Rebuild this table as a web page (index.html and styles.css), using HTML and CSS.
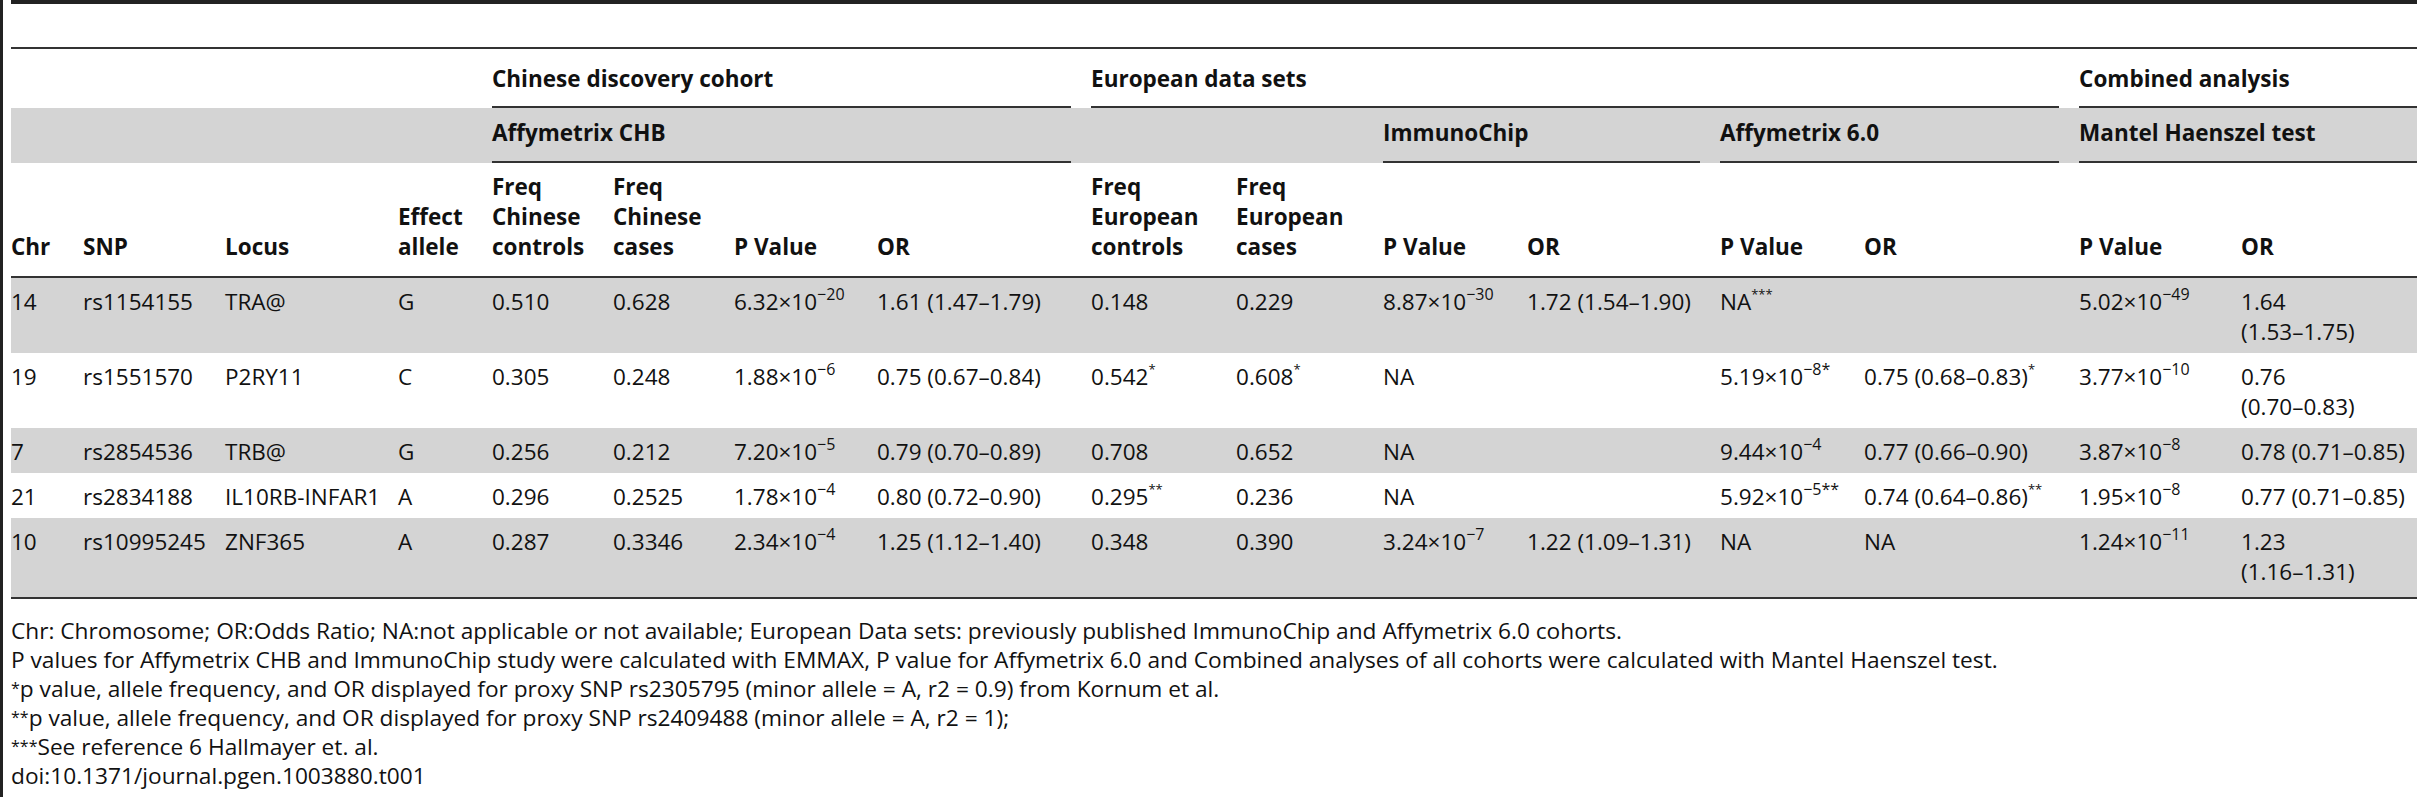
FILE: index.html
```html
<!DOCTYPE html>
<html lang="en">
<head>
  <meta charset="UTF-8">
  <meta name="viewport" content="width=device-width, initial-scale=1.0">
  <title>Table 1</title>
  <link rel="stylesheet" href="styles.css">
</head>
<body>
  <div class="page">
    <div class="topbar"></div>

    <table class="snp-table">
      <colgroup>
        <col class="w-chr"><col class="w-snp"><col class="w-locus"><col class="w-allele">
        <col class="w-cc"><col class="w-cc"><col class="w-p1"><col class="w-or1">
        <col class="w-ec"><col class="w-ecase"><col class="w-p2"><col class="w-or2">
        <col class="w-p3"><col class="w-or3"><col class="w-p4"><col class="w-or4">
      </colgroup>
      <thead>
        <tr class="tier1">
          <th colspan="4"></th>
          <th colspan="4"><div class="grp">Chinese discovery cohort</div></th>
          <th colspan="6"><div class="grp">European data sets</div></th>
          <th colspan="2"><div class="grp last">Combined analysis</div></th>
        </tr>
        <tr class="tier2">
          <th colspan="4"></th>
          <th colspan="4"><div class="grp">Affymetrix CHB</div></th>
          <th colspan="2"></th>
          <th colspan="2"><div class="grp">ImmunoChip</div></th>
          <th colspan="2"><div class="grp">Affymetrix 6.0</div></th>
          <th colspan="2"><div class="grp last">Mantel Haenszel test</div></th>
        </tr>
        <tr class="tier3">
          <th>Chr</th>
          <th>SNP</th>
          <th>Locus</th>
          <th>Effect<br>allele</th>
          <th>Freq<br>Chinese<br>controls</th>
          <th>Freq<br>Chinese<br>cases</th>
          <th>P Value</th>
          <th>OR</th>
          <th>Freq<br>European<br>controls</th>
          <th>Freq<br>European<br>cases</th>
          <th>P Value</th>
          <th>OR</th>
          <th>P Value</th>
          <th>OR</th>
          <th>P Value</th>
          <th>OR</th>
        </tr>
      </thead>
      <tbody>
        <tr class="shade">
          <td>14</td><td>rs1154155</td><td>TRA@</td><td>G</td>
          <td>0.510</td><td>0.628</td><td>6.32×10<sup>−20</sup></td><td>1.61 (1.47–1.79)</td>
          <td>0.148</td><td>0.229</td><td>8.87×10<sup>−30</sup></td><td>1.72 (1.54–1.90)</td>
          <td>NA<span class="ast">***</span></td><td></td><td>5.02×10<sup>−49</sup></td><td>1.64<br>(1.53–1.75)</td>
        </tr>
        <tr>
          <td>19</td><td>rs1551570</td><td>P2RY11</td><td>C</td>
          <td>0.305</td><td>0.248</td><td>1.88×10<sup>−6</sup></td><td>0.75 (0.67–0.84)</td>
          <td>0.542<span class="ast">*</span></td><td>0.608<span class="ast">*</span></td><td>NA</td><td></td>
          <td>5.19×10<sup>−8*</sup></td><td>0.75 (0.68–0.83)<span class="ast">*</span></td><td>3.77×10<sup>−10</sup></td><td>0.76<br>(0.70–0.83)</td>
        </tr>
        <tr class="shade">
          <td>7</td><td>rs2854536</td><td>TRB@</td><td>G</td>
          <td>0.256</td><td>0.212</td><td>7.20×10<sup>−5</sup></td><td>0.79 (0.70–0.89)</td>
          <td>0.708</td><td>0.652</td><td>NA</td><td></td>
          <td>9.44×10<sup>−4</sup></td><td>0.77 (0.66–0.90)</td><td>3.87×10<sup>−8</sup></td><td>0.78 (0.71–0.85)</td>
        </tr>
        <tr>
          <td>21</td><td>rs2834188</td><td>IL10RB-INFAR1</td><td>A</td>
          <td>0.296</td><td>0.2525</td><td>1.78×10<sup>−4</sup></td><td>0.80 (0.72–0.90)</td>
          <td>0.295<span class="ast">**</span></td><td>0.236</td><td>NA</td><td></td>
          <td>5.92×10<sup>−5**</sup></td><td>0.74 (0.64–0.86)<span class="ast">**</span></td><td>1.95×10<sup>−8</sup></td><td>0.77 (0.71–0.85)</td>
        </tr>
        <tr class="shade">
          <td>10</td><td>rs10995245</td><td>ZNF365</td><td>A</td>
          <td>0.287</td><td>0.3346</td><td>2.34×10<sup>−4</sup></td><td>1.25 (1.12–1.40)</td>
          <td>0.348</td><td>0.390</td><td>3.24×10<sup>−7</sup></td><td>1.22 (1.09–1.31)</td>
          <td>NA</td><td>NA</td><td>1.24×10<sup>−11</sup></td><td>1.23<br>(1.16–1.31)</td>
        </tr>
      </tbody>
    </table>

    <div class="notes">
      <p>Chr: Chromosome; OR:Odds Ratio; NA:not applicable or not available; European Data sets: previously published ImmunoChip and Affymetrix 6.0 cohorts.</p>
      <p>P values for Affymetrix CHB and ImmunoChip study were calculated with EMMAX, P value for Affymetrix 6.0 and Combined analyses of all cohorts were calculated with Mantel Haenszel test.</p>
      <p><span class="star">*</span>p value, allele frequency, and OR displayed for proxy SNP rs2305795 (minor allele = A, r2 = 0.9) from Kornum et al.</p>
      <p><span class="star">**</span>p value, allele frequency, and OR displayed for proxy SNP rs2409488 (minor allele = A, r2 = 1);</p>
      <p><span class="star">***</span>See reference 6 Hallmayer et. al.</p>
      <p>doi:10.1371/journal.pgen.1003880.t001</p>
    </div>
  </div>
</body>
</html>
```

FILE: styles.css
```css
body {
  margin: 0;
  padding: 0;
  font-family: "Open Sans", "Noto Sans", sans-serif;
  color: #111;
  background-color: white;
  overflow: hidden;
}

.page {
  height: 797px;
  border-left: 3px solid #222;
  padding-left: 8px;
}

.topbar {
  height: 4px;
  background-color: #222;
  margin-bottom: 43px;
}

/* Tabla principal */
.snp-table {
  width: 2406px;
  table-layout: fixed;
  border-collapse: separate;
  border-spacing: 0;
  border-top: 2px solid #333;
  border-bottom: 2px solid #333;
  font-size: 22.5px;
  line-height: 30px;
}

.w-chr { width: 72px; }
.w-snp { width: 142px; }
.w-locus { width: 173px; }
.w-allele { width: 94px; }
.w-cc { width: 121px; }
.w-p1 { width: 143px; }
.w-or1 { width: 214px; }
.w-ec { width: 145px; }
.w-ecase { width: 147px; }
.w-p2 { width: 144px; }
.w-or2 { width: 193px; }
.w-p3 { width: 144px; }
.w-or3 { width: 215px; }
.w-p4 { width: 162px; }
.w-or4 { width: 176px; }

.snp-table th {
  font-size: 22.5px;
  font-weight: bold;
  text-align: left;
  padding: 0;
  white-space: nowrap;
}

.tier1 .grp {
  padding: 15px 0 12px;
  border-bottom: 2px solid #333;
  margin-right: 20px;
}

.tier2 th {
  background-color: #d4d4d4;
}

.tier2 .grp {
  padding: 10px 0 13px;
  border-bottom: 2px solid #333;
  margin-right: 20px;
}

.grp.last {
  margin-right: 0;
}

.tier3 th {
  vertical-align: bottom;
  padding: 9px 0 14px;
  border-bottom: 2px solid #333;
}

.snp-table td {
  vertical-align: top;
  padding: 9px 0 6px;
  white-space: nowrap;
}

.snp-table tbody tr:last-child td {
  padding-bottom: 10px;
}

.shade td {
  background-color: #d4d4d4;
}

sup {
  font-size: 16px;
  line-height: 0;
  vertical-align: 10px;
}

.ast {
  font-size: 13px;
  line-height: 0;
  vertical-align: 11px;
}

/* Notas al pie */
.notes {
  margin-top: 17px;
  font-size: 22.7px;
  line-height: 29px;
}

.notes p {
  margin: 0;
  white-space: nowrap;
}

.notes .star {
  font-size: 16px;
  vertical-align: 3px;
  line-height: 0;
}
```
